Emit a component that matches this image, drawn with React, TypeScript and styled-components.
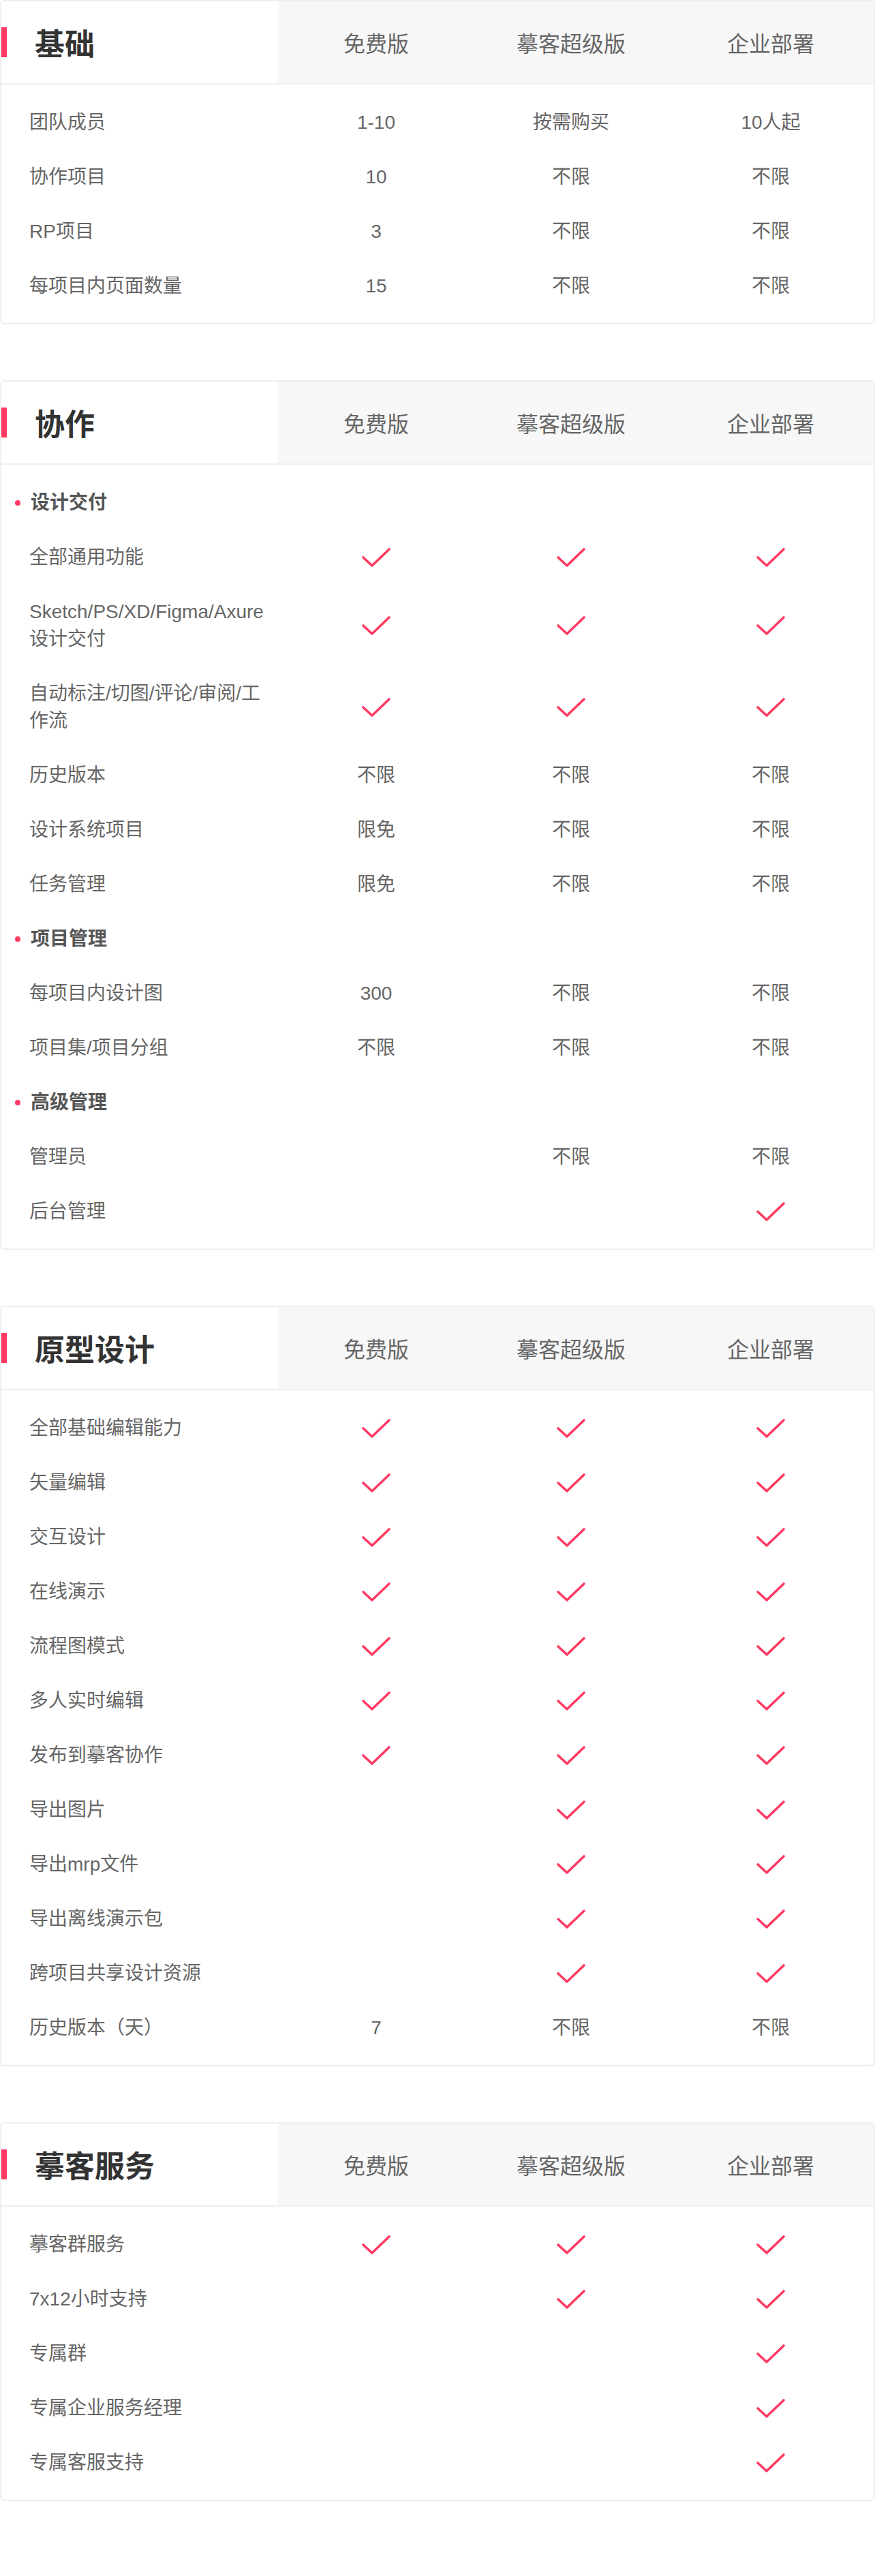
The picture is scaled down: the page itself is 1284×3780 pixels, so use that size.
/*
┏━━━━━━━━━━━━━━━━━━━━━━━━━━━━━━━━━━━━━━━━━━━━━━━━━━━━━━━━━━━━━━━━━━━━━━━━┓
┃ Imports                                                                ┃
┣━━━━━━━━━━━━━━━━━━━━━━━━━━━━━━━━━━━━━━━━━━━━━━━━━━━━━━━━━━━━━━━━━━━━━━━━┫*/
import styled, { createGlobalStyle } from "styled-components";
/*
┗━━━━━━━━━━━━━━━━━━━━━━━━━━━━━━━━━━━━━━━━━━━━━━━━━━━━━━━━━━━━━━━━━━━━━━━━┛*/
/*
┏━━━━━━━━━━━━━━━━━━━━━━━━━━━━━━━━━━━━━━━━━━━━━━━━━━━━━━━━━━━━━━━━━━━━━━━━┓
┃ Data                                                                   ┃
┣━━━━━━━━━━━━━━━━━━━━━━━━━━━━━━━━━━━━━━━━━━━━━━━━━━━━━━━━━━━━━━━━━━━━━━━━┫*/
// "v" = check mark, "" = empty cell
type Cell = string;
type Row =
	| { kind: "sub"; label: string }
	| { kind: "item"; label: string; cells: [Cell, Cell, Cell] };

interface Section {
	title: string;
	rows: Row[];
}

const item = (label: string, a: Cell, b: Cell, c: Cell): Row => ({
	kind: "item",
	label,
	cells: [a, b, c],
});
const sub = (label: string): Row => ({ kind: "sub", label });

const plans = ["免费版", "摹客超级版", "企业部署"];

const sections: Section[] = [
	{
		title: "基础",
		rows: [
			item("团队成员", "1-10", "按需购买", "10人起"),
			item("协作项目", "10", "不限", "不限"),
			item("RP项目", "3", "不限", "不限"),
			item("每项目内页面数量", "15", "不限", "不限"),
		],
	},
	{
		title: "协作",
		rows: [
			sub("设计交付"),
			item("全部通用功能", "v", "v", "v"),
			item("Sketch/PS/XD/Figma/Axure设计交付", "v", "v", "v"),
			item("自动标注/切图/评论/审阅/工作流", "v", "v", "v"),
			item("历史版本", "不限", "不限", "不限"),
			item("设计系统项目", "限免", "不限", "不限"),
			item("任务管理", "限免", "不限", "不限"),
			sub("项目管理"),
			item("每项目内设计图", "300", "不限", "不限"),
			item("项目集/项目分组", "不限", "不限", "不限"),
			sub("高级管理"),
			item("管理员", "", "不限", "不限"),
			item("后台管理", "", "", "v"),
		],
	},
	{
		title: "原型设计",
		rows: [
			item("全部基础编辑能力", "v", "v", "v"),
			item("矢量编辑", "v", "v", "v"),
			item("交互设计", "v", "v", "v"),
			item("在线演示", "v", "v", "v"),
			item("流程图模式", "v", "v", "v"),
			item("多人实时编辑", "v", "v", "v"),
			item("发布到摹客协作", "v", "v", "v"),
			item("导出图片", "", "v", "v"),
			item("导出mrp文件", "", "v", "v"),
			item("导出离线演示包", "", "v", "v"),
			item("跨项目共享设计资源", "", "v", "v"),
			item("历史版本（天）", "7", "不限", "不限"),
		],
	},
	{
		title: "摹客服务",
		rows: [
			item("摹客群服务", "v", "v", "v"),
			item("7x12小时支持", "", "v", "v"),
			item("专属群", "", "", "v"),
			item("专属企业服务经理", "", "", "v"),
			item("专属客服支持", "", "", "v"),
		],
	},
];
/*
┗━━━━━━━━━━━━━━━━━━━━━━━━━━━━━━━━━━━━━━━━━━━━━━━━━━━━━━━━━━━━━━━━━━━━━━━━┛*/

const pal = {
	accent: "#ff3b64",
	title: "#333333",
	text: "#666666",
	sub: "#555555",
	line: "#eeeeee",
	headBg: "#f7f7f7",
	white: "#ffffff",
};

const cols = "406px 288px 284px 1fr";

const GlobalStyle = createGlobalStyle`
	html, body {
		margin: 0;
		padding: 0;
		background: ${pal.white};
	}
	body {
		font-family: "Liberation Sans", "Noto Sans CJK SC", sans-serif;
		color: ${pal.text};
	}
	* {
		box-sizing: border-box;
	}
`;

export const Page = styled.div`
	width: 1284px;
	display: flex;
	flex-direction: column;
	gap: 82px;
`;

export const Card = styled.section`
	border: 2px solid ${pal.line};
	border-radius: 6px;
	overflow: hidden;
	background: ${pal.white};
`;

export const Head = styled.div`
	display: grid;
	grid-template-columns: ${cols};
	height: 122px;
	border-bottom: 2px solid ${pal.line};
`;

export const Title = styled.h2`
	margin: 0;
	display: flex;
	align-items: center;
	gap: 41px;
	font-size: 44px;
	font-weight: bold;
	color: ${pal.title};
	background: ${pal.white};

	&::before {
		content: "";
		display: block;
		width: 8px;
		height: 44px;
		background: ${pal.accent};
	}
`;

export const PlanName = styled.div`
	display: flex;
	align-items: center;
	justify-content: center;
	background: ${pal.headBg};
	font-size: 32px;
	color: ${pal.text};
`;

export const Body = styled.div`
	padding: 16px 0 14px;
`;

export const Line = styled.div`
	display: grid;
	grid-template-columns: ${cols};
	padding: 20px 0;
	font-size: 28px;
	line-height: 40px;
`;

export const Label = styled.div`
	padding: 0 14px 0 41px;
	color: ${pal.text};
`;

export const SubLabel = styled.div`
	grid-column: 1 / -1;
	display: flex;
	align-items: center;
	gap: 15px;
	padding-left: 20px;
	font-weight: bold;
	color: ${pal.sub};

	&::before {
		content: "";
		width: 8px;
		height: 8px;
		border-radius: 50%;
		background: ${pal.accent};
	}
`;

export const Value = styled.div`
	display: flex;
	align-items: center;
	justify-content: center;
	color: ${pal.text};
`;

/*
┏━━━━━━━━━━━━━━━━━━━━━━━━━━━━━━━━━━━━━━━━━━━━━━━━━━━━━━━━━━━━━━━━━━━━━━━━┓
┃ Component                                                              ┃
┣━━━━━━━━━━━━━━━━━━━━━━━━━━━━━━━━━━━━━━━━━━━━━━━━━━━━━━━━━━━━━━━━━━━━━━━━┫*/
function Check() {
	return (
		<svg width="44" height="30" viewBox="0 0 44 30" fill="none">
			<path
				d="M3 15 L16 27 L41 3"
				stroke={pal.accent}
				strokeWidth="3.6"
				strokeLinecap="round"
				strokeLinejoin="round"
			/>
		</svg>
	);
}

function PlanCard({ section }: { section: Section }) {
	return (
		<Card>
			<Head>
				<Title>{section.title}</Title>
				{plans.map((p) => (
					<PlanName key={p}>{p}</PlanName>
				))}
			</Head>
			<Body>
				{section.rows.map((row, i) =>
					row.kind === "sub" ? (
						<Line key={i}>
							<SubLabel>{row.label}</SubLabel>
						</Line>
					) : (
						<Line key={i}>
							<Label>{row.label}</Label>
							{row.cells.map((c, j) => (
								<Value key={j}>{c === "v" ? <Check /> : c}</Value>
							))}
						</Line>
					)
				)}
			</Body>
		</Card>
	);
}

export default function App() {
	return (
		<>
			<GlobalStyle />
			<Page>
				{sections.map((s) => (
					<PlanCard key={s.title} section={s} />
				))}
			</Page>
		</>
	);
}
/*
┗━━━━━━━━━━━━━━━━━━━━━━━━━━━━━━━━━━━━━━━━━━━━━━━━━━━━━━━━━━━━━━━━━━━━━━━━┛*/
